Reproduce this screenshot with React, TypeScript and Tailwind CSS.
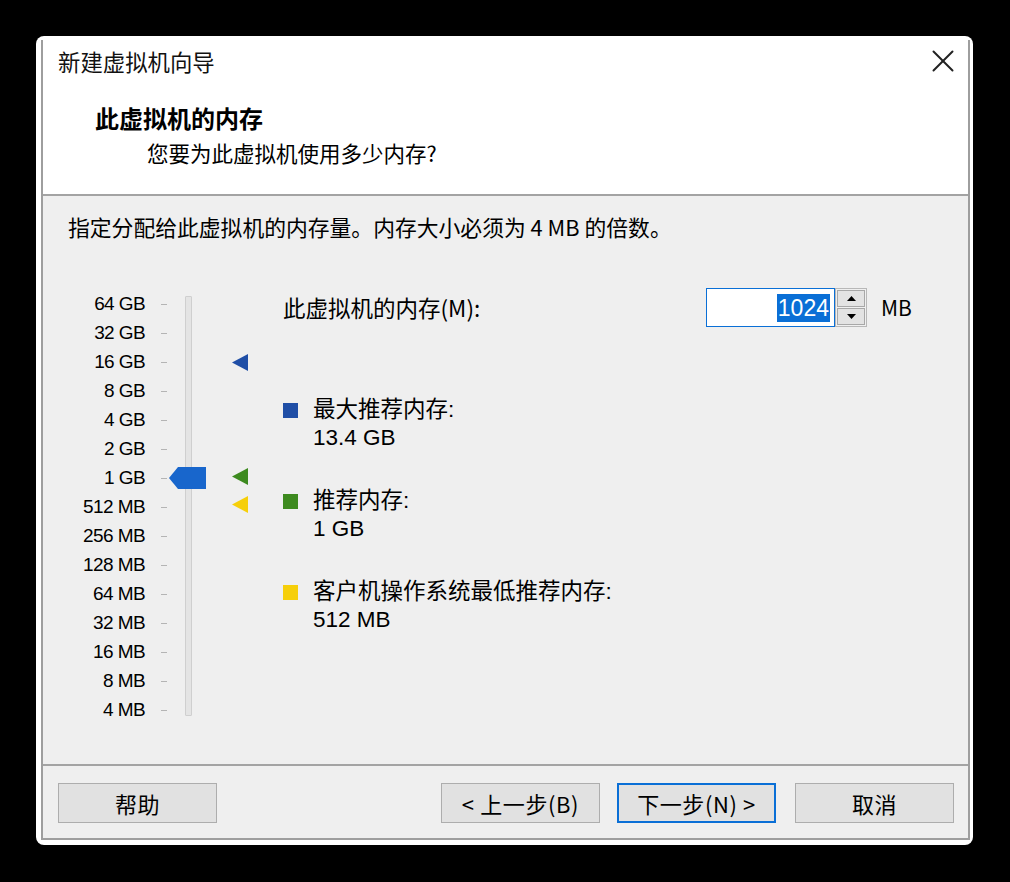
import { X } from "lucide-react";

const FONT = { fontFamily: '"Noto Sans CJK SC", "Noto Sans", sans-serif' };
const LABEL_FONT = { fontFamily: '"Liberation Sans", "Noto Sans CJK SC", sans-serif' };

const STEPS = [
  "64 GB", "32 GB", "16 GB", "8 GB", "4 GB", "2 GB", "1 GB",
  "512 MB", "256 MB", "128 MB", "64 MB", "32 MB", "16 MB", "8 MB", "4 MB",
];

// marker triangles next to the track (top in px inside the slider block)
const MARKERS = [
  { top: 64, color: "#1f4ea6" },
  { top: 178, color: "#3d8a1f" },
  { top: 206, color: "#f6cf0a" },
];

const LEGEND = [
  { color: "#1f4ea6", title: "最大推荐内存:", value: "13.4 GB" },
  { color: "#3d8a1f", title: "推荐内存:", value: "1 GB" },
  { color: "#f6cf0a", title: "客户机操作系统最低推荐内存:", value: "512 MB" },
];

function Triangle({ color }: { color: string }) {
  return (
    <svg width="16" height="17" viewBox="0 0 16 17">
      <polygon points="0,8.5 16,0 16,17" fill={color} />
    </svg>
  );
}

function Slider() {
  return (
    <div className="relative flex w-[215px] shrink-0">
      {/* labels */}
      <div className="flex w-[77px] flex-col" style={LABEL_FONT}>
        {STEPS.map((s) => (
          <div key={s} className="flex h-[29px] items-center justify-end text-[19px] tracking-[-0.6px] text-black">
            {s}
          </div>
        ))}
      </div>
      {/* tick marks */}
      <div className="ml-[16px] flex w-[6px] flex-col">
        {STEPS.map((s) => (
          <div key={s} className="flex h-[29px] items-center">
            <div className="h-[1px] w-[6px] bg-[#b4b4b4]" />
          </div>
        ))}
      </div>
      {/* track */}
      <div className="ml-[18px] mt-[6px] h-[420px] w-[7px] rounded-[1px] border border-[#cfcfcf] bg-[#e4e4e4]" />

      {/* thumb */}
      <svg className="absolute left-[101px] top-[177px]" width="37" height="22" viewBox="0 0 37 22">
        <polygon points="0,11 9,0 37,0 37,22 9,22" fill="#1866cc" />
      </svg>

      {MARKERS.map((m) => (
        <div key={m.top} className="absolute left-[164px]" style={{ top: m.top }}>
          <Triangle color={m.color} />
        </div>
      ))}
    </div>
  );
}

function Spinner() {
  return (
    <div className="flex h-[39px] w-[32px] flex-col gap-[1px] border border-[#b8b8b8] bg-[#f0f0f0] p-[1px]">
      <div className="flex flex-1 items-center justify-center border border-[#a8a8a8] bg-[#e3e3e3]">
        <svg width="9" height="5" viewBox="0 0 9 5"><polygon points="0,5 4.5,0 9,5" fill="#000" /></svg>
      </div>
      <div className="flex flex-1 items-center justify-center border border-[#a8a8a8] bg-[#e3e3e3]">
        <svg width="9" height="5" viewBox="0 0 9 5"><polygon points="0,0 9,0 4.5,5" fill="#000" /></svg>
      </div>
    </div>
  );
}

function Button({ label, focused }: { label: string; focused?: boolean }) {
  return (
    <button
      className={`flex h-[40px] w-[159px] items-center justify-center bg-[#e1e1e1] text-[22px] tracking-[0.6px] text-black ${
        focused ? "border-2 border-[#0a6fd6]" : "border border-[#adadad]"
      }`}
    >
      {label}
    </button>
  );
}

export default function App() {
  return (
    <div className="h-[882px] w-[1010px] bg-black pl-[36px] pt-[36px]" style={FONT}>
      <div className="flex h-[809px] w-[937px] flex-col rounded-[8px] bg-white pb-[5px] pl-[5px] pr-[3px] pt-[4px]">
        <div className="flex flex-1 flex-col border-x-2 border-b-2 border-[#9e9e9e]">
          {/* header */}
          <div className="flex h-[156px] shrink-0 flex-col border-b-2 border-[#a3a3a3] bg-white">
            <div className="flex h-[42px] items-center justify-between pl-[15px] pr-[6px]">
              <span className="text-[22.4px] leading-[30px] text-[#111]">新建虚拟机向导</span>
              <X className="h-[38px] w-[38px] text-[#222]" strokeWidth={1.25} />
            </div>
            <div className="mt-[21px] pl-[52px] text-[24px] font-bold leading-[30px] text-black">此虚拟机的内存</div>
            <div className="mt-[5px] pl-[104px] text-[21.5px] leading-[30px] text-black">您要为此虚拟机使用多少内存?</div>
          </div>

          {/* body */}
          <div className="flex h-[570px] shrink-0 flex-col border-b-2 border-[#a3a3a3] bg-[#efefef] pl-[25px]">
            <div className="mt-[16px] text-[21.8px] leading-[30px] text-black">
              指定分配给此虚拟机的内存量。内存大小必须为 4 MB 的倍数。
            </div>

            <div className="mt-[48px] flex">
              <Slider />

              <div className="flex flex-col">
                <div className="-mt-[2px] flex h-[39px] items-center">
                  <span className="w-[423px] text-[22.5px] text-black">此虚拟机的内存(M):</span>
                  <div className="flex h-[39px] w-[129px] items-center justify-end border border-[#0a6fd6] bg-white pr-[4px]">
                    <span className="bg-[#0a6fd6] px-[1px] text-[23px] leading-[28px] text-white" style={LABEL_FONT}>1024</span>
                  </div>
                  <Spinner />
                  <span className="ml-[14px] text-[21px] text-black">MB</span>
                </div>

                <div className="mt-[69px] flex flex-col gap-[35px]" style={LABEL_FONT}>
                  {LEGEND.map((l) => (
                    <div key={l.title} className="flex flex-col">
                      <div className="flex h-[28px] items-center">
                        <div className="h-[15px] w-[15px]" style={{ backgroundColor: l.color }} />
                        <span className="ml-[15px] text-[22.5px] leading-[28px] text-black">{l.title}</span>
                      </div>
                      <span className="ml-[30px] text-[22.5px] leading-[28px] text-black">{l.value}</span>
                    </div>
                  ))}
                </div>
              </div>
            </div>
          </div>

          {/* footer */}
          <div className="flex flex-1 items-start bg-[#efefef] pl-[15px] pr-[14px] pt-[17px]">
            <Button label="帮助" />
            <div className="ml-auto flex">
              <Button label="< 上一步(B)" />
              <div className="ml-[17px]"><Button label="下一步(N) >" focused /></div>
              <div className="ml-[19px]"><Button label="取消" /></div>
            </div>
          </div>
        </div>
      </div>
    </div>
  );
}
